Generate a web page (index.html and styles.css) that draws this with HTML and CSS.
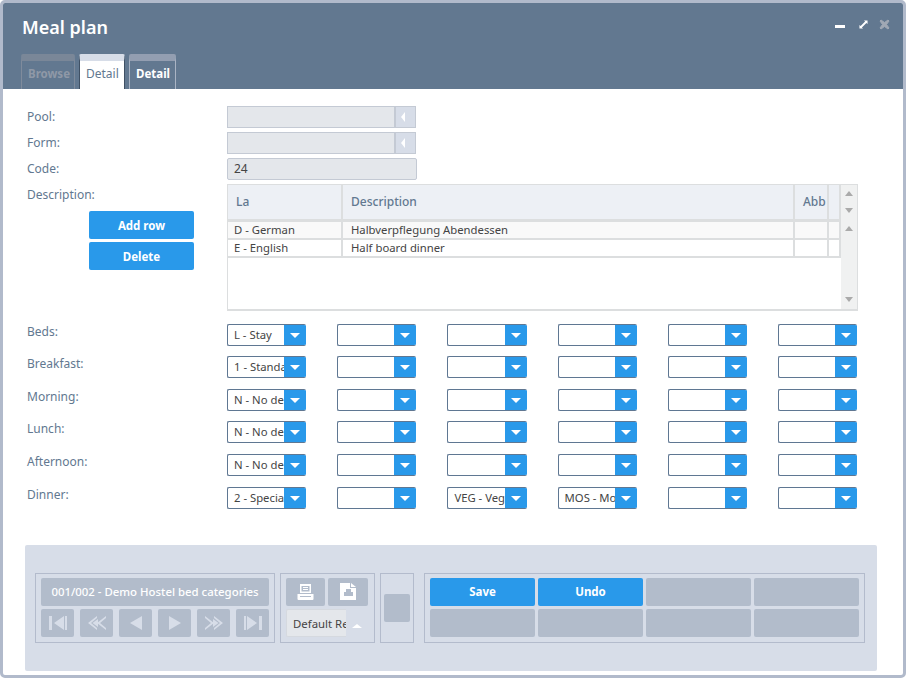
FILE: index.html
```html
<!DOCTYPE html>
<html lang="en">
<head>
<meta charset="UTF-8" />
<title>Meal plan</title>
<link rel="stylesheet" href="styles.css">
</head>
<body>

<div class="window">
  <div class="header">
    <div class="title-row">
      <h1>Meal plan</h1>
      <div class="win-icons">
        <span class="win-min"></span>
        <svg class="win-max" width="9" height="9" viewBox="0 0 10 10"><path d="M5.5 0.5H9.5V4.5L8.2 3.2L3.2 8.2L4.5 9.5H0.5V5.5L1.8 6.8L6.8 1.8Z" fill="#fff"/></svg>
        <svg class="win-close" width="11" height="11" viewBox="0 0 11 11"><path d="M2 1L5.500 3.500L9 1L10 2L7.500 5.500L10 9L9 10L5.500 7.500L2 10L1 9L3.500 5.500L1 2Z" fill="#a0a8b4" stroke="#a0a8b4"/></svg>
      </div>
    </div>
    <div class="tabs">
      <div class="tab tab-disabled">Browse</div>
      <div class="tab tab-active">Detail</div>
      <div class="tab tab-other">Detail</div>
    </div>
  </div>

  <div class="content">
    <div class="form-top">
      <label>Pool:</label>
      <div class="lookup"><div class="lookup-input"></div><div class="lookup-btn"><i class="tri-left"></i></div></div>
      <label>Form:</label>
      <div class="lookup"><div class="lookup-input"></div><div class="lookup-btn"><i class="tri-left"></i></div></div>
      <label>Code:</label>
      <div class="code-input">24</div>
      <div class="desc-side">
        <label>Description:</label>
        <button class="blue-btn add-row">Add row</button>
        <button class="blue-btn">Delete</button>
      </div>
      <div class="grid-box">
        <table class="grid">
          <colgroup><col class="c1"><col class="c2"><col class="c3"><col class="c4"></colgroup>
          <tr class="grid-head"><th>La</th><th>Description</th><th>Abb</th><th></th></tr>
          <tr class="odd"><td>D - German</td><td>Halbverpflegung Abendessen</td><td></td><td></td></tr>
          <tr><td>E - English</td><td>Half board dinner</td><td></td><td></td></tr>
        </table>
        <div class="scrollbar">
          <i class="tri-up"></i>
          <i class="tri-down head-down"></i>
          <i class="tri-up body-up"></i>
          <i class="tri-down body-down"></i>
        </div>
      </div>
    </div>

    <div class="meal-rows">
      <div class="meal-row">
        <label>Beds:</label>
        <div class="sels">
          <div class="sel"><span>L - Stay</span><b></b></div>
          <div class="sel"><span></span><b></b></div>
          <div class="sel"><span></span><b></b></div>
          <div class="sel"><span></span><b></b></div>
          <div class="sel"><span></span><b></b></div>
          <div class="sel"><span></span><b></b></div>
        </div>
      </div>
      <div class="meal-row">
        <label>Breakfast:</label>
        <div class="sels">
          <div class="sel"><span>1 - Standard</span><b></b></div>
          <div class="sel"><span></span><b></b></div>
          <div class="sel"><span></span><b></b></div>
          <div class="sel"><span></span><b></b></div>
          <div class="sel"><span></span><b></b></div>
          <div class="sel"><span></span><b></b></div>
        </div>
      </div>
      <div class="meal-row">
        <label>Morning:</label>
        <div class="sels">
          <div class="sel"><span>N - No demand</span><b></b></div>
          <div class="sel"><span></span><b></b></div>
          <div class="sel"><span></span><b></b></div>
          <div class="sel"><span></span><b></b></div>
          <div class="sel"><span></span><b></b></div>
          <div class="sel"><span></span><b></b></div>
        </div>
      </div>
      <div class="meal-row">
        <label>Lunch:</label>
        <div class="sels">
          <div class="sel"><span>N - No demand</span><b></b></div>
          <div class="sel"><span></span><b></b></div>
          <div class="sel"><span></span><b></b></div>
          <div class="sel"><span></span><b></b></div>
          <div class="sel"><span></span><b></b></div>
          <div class="sel"><span></span><b></b></div>
        </div>
      </div>
      <div class="meal-row">
        <label>Afternoon:</label>
        <div class="sels">
          <div class="sel"><span>N - No demand</span><b></b></div>
          <div class="sel"><span></span><b></b></div>
          <div class="sel"><span></span><b></b></div>
          <div class="sel"><span></span><b></b></div>
          <div class="sel"><span></span><b></b></div>
          <div class="sel"><span></span><b></b></div>
        </div>
      </div>
      <div class="meal-row">
        <label>Dinner:</label>
        <div class="sels">
          <div class="sel"><span>2 - Special</span><b></b></div>
          <div class="sel"><span></span><b></b></div>
          <div class="sel"><span>VEG - Vegetarian</span><b></b></div>
          <div class="sel"><span>MOS - Moslem</span><b></b></div>
          <div class="sel"><span></span><b></b></div>
          <div class="sel"><span></span><b></b></div>
        </div>
      </div>
    </div>

    <div class="toolbar">
      <div class="group group-nav">
        <div class="record">001/002 - Demo Hostel bed categories</div>
        <div class="nav-row">
          <div class="tool-btn"><svg width="22" height="16" viewBox="0 0 22 16"><path d="M2 1H5V15H2ZM17 1V15L7 8ZM18 1H20V15H18Z" fill="#d7dde8"/></svg></div>
          <div class="tool-btn"><svg width="22" height="16" viewBox="0 0 22 16"><path d="M11 1L2 8L11 15V13L5 8L11 3ZM20 1L11 8L20 15V13L14 8L20 3Z" fill="#d7dde8"/><path d="M12 4V12L6.500 8Z" fill="#d7dde8"/></svg></div>
          <div class="tool-btn"><svg width="22" height="16" viewBox="0 0 22 16"><path d="M17 1V15L5 8Z" fill="#d7dde8"/></svg></div>
          <div class="tool-btn"><svg width="22" height="16" viewBox="0 0 22 16"><path d="M5 1V15L17 8Z" fill="#d7dde8"/></svg></div>
          <div class="tool-btn"><svg width="22" height="16" viewBox="0 0 22 16"><path d="M2 1L11 8L2 15V13L8 8L2 3ZM11 1L20 8L11 15V13L17 8L11 3Z" fill="#d7dde8"/><path d="M10 4V12L15.500 8Z" fill="#d7dde8"/></svg></div>
          <div class="tool-btn"><svg width="22" height="16" viewBox="0 0 22 16"><path d="M2 1H4V15H2ZM5 1V15L15 8ZM17 1H20V15H17Z" fill="#d7dde8"/></svg></div>
        </div>
      </div>
      <div class="group group-print">
        <div class="print-row">
          <div class="tool-btn print-btn"><svg width="17" height="16" viewBox="0 0 17 16"><path d="M3 0H14V9H3ZM4.500 2V7.500H12.500V2Z" fill="#fff" fill-rule="evenodd"/><path d="M6 3H11V4H6ZM6 5H11V6H6Z" fill="#fff"/><path d="M0.500 10H16.500V15Q16.500 16 15.500 16H1.500Q0.500 16 0.500 15ZM3 12V13H14V12Z" fill="#fff" fill-rule="evenodd"/></svg></div>
          <div class="tool-btn doc-btn"><svg width="16" height="17" viewBox="0 0 16 17"><path d="M0 0H10V5H16V17H0ZM6 6V9H11V6ZM4 9V13H13V9Z" fill="#fff" fill-rule="evenodd"/><path d="M11 0L16 4H11Z" fill="#fff"/></svg></div>
        </div>
        <div class="report-row">
          <div class="report-sel">Default Report</div>
          <i class="tri-up-white"></i>
        </div>
      </div>
      <div class="group group-single">
        <div class="tool-btn single-btn"></div>
      </div>
      <div class="group group-actions">
        <div class="tool-btn act-blue">Save</div>
        <div class="tool-btn act-blue">Undo</div>
        <div class="tool-btn"></div>
        <div class="tool-btn"></div>
        <div class="tool-btn"></div>
        <div class="tool-btn"></div>
        <div class="tool-btn"></div>
        <div class="tool-btn"></div>
      </div>
    </div>
  </div>
</div>

</body>
</html>
```

FILE: styles.css
```css
* {
  box-sizing: border-box;
}
html, body {
  margin: 0;
  background: #fff;
}
body {
  font-family: "Noto Sans", "Open Sans", sans-serif;
  font-size: 12px;
  color: #444;
}
.window {
  width: 906px;
  height: 678px;
  border: 3px solid #b1bacb;
  border-radius: 5px;
  background: #fff;
  overflow: hidden;
}

/* header */
.header {
  height: 86px;
  background: #627890;
  padding: 0 0 0 18px;
  display: flex;
  flex-direction: column;
  justify-content: space-between;
}
.title-row {
  display: flex;
  justify-content: space-between;
  padding-top: 11px;
}
h1 {
  margin: 0;
  font-size: 18px;
  line-height: 26px;
  font-weight: 600;
  color: #fff;
  padding-left: 1px;
}
.win-icons {
  display: flex;
  align-items: flex-start;
  padding-right: 13px;
  padding-top: 5px;
}
.win-min {
  width: 10px;
  height: 3px;
  background: #fff;
  margin-top: 6px;
}
.win-max {
  margin-left: 14px;
  margin-top: 1px;
}
.win-close {
  margin-left: 11px;
  margin-top: 0;
}
.tabs {
  display: flex;
  gap: 4px;
}
.tab {
  height: 35px;
  padding: 3px 6px 0;
  border: 1px solid;
  border-bottom: 0;
  border-top-width: 7px;
  border-radius: 2px 2px 0 0;
  font-size: 12px;
  line-height: 20px;
}
.tab-disabled {
  width: 54px;
  border-color: #7a8798 #7f8b9c;
  color: #8f98a7;
  font-size: 11.500px;
  font-weight: 700;
}
.tab-active {
  width: 46px;
  background: #fff;
  border-color: #d7dde8 #3f5064;
  color: #627890;
}
.tab-other {
  width: 47px;
  border-color: #939eb1 #aab4c4;
  color: #fff;
  font-size: 11.500px;
  font-weight: 700;
}

/* form */
.content {
  padding: 17px 0 0 22px;
}
label {
  display: block;
  color: #627890;
  line-height: 21px;
  padding-left: 2px;
}
.form-top {
  display: grid;
  grid-template-columns: 202px 631px;
  grid-template-rows: 22px 22px 22px 127px;
  row-gap: 4px;
}
.lookup {
  display: flex;
  width: 189px;
  height: 22px;
}
.lookup-input {
  flex: 1;
  background: #e4e7eb;
  border: 1px solid #c4cad4;
  border-right-width: 2px;
}
.lookup-btn {
  width: 20px;
  background: #d7dde8;
  border: 1px solid #c4cad4;
  border-left: 0;
  display: flex;
  align-items: center;
  justify-content: center;
}
.tri-left {
  border-top: 5px solid transparent;
  border-bottom: 5px solid transparent;
  border-right: 4px solid #fff;
  margin-right: 5px;
}
.code-input {
  width: 190px;
  height: 22px;
  background: #e4e7eb;
  border: 1px solid #c4cad4;
  border-radius: 2px;
  padding-left: 6px;
  line-height: 20px;
}
.add-row {
  margin-top: 6px;
  margin-bottom: 3px;
}
.blue-btn {
  display: block;
  width: 105px;
  height: 28px;
  margin-left: 64px;
  border: 0;
  border-radius: 2px;
  background: #2999ea;
  color: #fff;
  font-family: inherit;
  font-size: 11.500px;
  font-weight: 700;
  padding: 0;
}
.grid-box {
  height: 127px;
  border: 1px solid #dcdedf;
  border-width: 1px 1px 2px 1px;
  display: flex;
  justify-content: space-between;
}
.grid {
  width: 612px;
  table-layout: fixed;
  border-collapse: collapse;
  align-self: flex-start;
  font-size: 11.300px;
}
.c1 { width: 114px; }
.c2 { width: 452px; }
.c3 { width: 34px; }
.c4 { width: 12px; }
.grid th {
  height: 35px;
  background: #edf0f5;
  border-right: 2px solid #dcdedf;
  border-bottom: 3px solid #dcdedf;
  text-align: left;
  color: #627890;
  font-size: 12px;
  font-weight: 500;
  padding: 0 8px;
  overflow: hidden;
  white-space: nowrap;
}
.grid td {
  height: 18px;
  border-right: 2px solid #dcdedf;
  border-bottom: 2px solid #dcdedf;
  padding: 0 8px;
  line-height: 16px;
  overflow: hidden;
  white-space: nowrap;
}
.grid th:last-child, .grid td:last-child {
  padding: 0;
}
.grid td:first-child {
  padding-left: 6px;
}
.odd td {
  background: #f9f9f9;
}
.scrollbar {
  width: 18px;
  background: #f0f1f1;
  display: flex;
  flex-direction: column;
  align-items: center;
  padding-top: 6px;
}
.tri-up, .tri-down {
  width: 0;
  height: 0;
  border-left: 4px solid transparent;
  border-right: 4px solid transparent;
}
.tri-up {
  border-bottom: 5px solid #aaa;
}
.tri-down {
  border-top: 5px solid #aaa;
}
.head-down {
  margin-top: 12px;
}
.body-up {
  margin-top: 13px;
}
.body-down {
  margin-top: 66px;
}

/* meal rows */
.meal-rows {
  margin-top: 12.600px;
  display: flex;
  flex-direction: column;
  gap: 10.600px;
}
.meal-row {
  display: flex;
  height: 22px;
}
.meal-row label {
  width: 202px;
  flex: none;
  line-height: 16px;
}
.sels {
  width: 630.300px;
  display: flex;
  justify-content: space-between;
}
.sel {
  display: flex;
  width: 79.300px;
  height: 22px;
  border: 1px solid #5f7792;
  border-right: 0;
  border-radius: 2px;
  background: #fff;
  overflow: hidden;
  font-size: 11.300px;
}
.sel span {
  flex: 1;
  min-width: 0;
  padding-left: 6px;
  line-height: 20px;
  white-space: nowrap;
  overflow: hidden;
}
.sel b {
  width: 22px;
  margin: -1px 0;
  background: #2999ea;
  position: relative;
  flex: none;
}
.sel b::after {
  content: "";
  position: absolute;
  left: 6px;
  top: 9px;
  border-left: 5px solid transparent;
  border-right: 5px solid transparent;
  border-top: 5px solid #fff;
}

/* bottom toolbar */
.toolbar {
  width: 852px;
  height: 126px;
  margin-top: 36.400px;
  background: #d7dde8;
  border-radius: 2px;
  padding: 28px 12px 0 10px;
  display: flex;
  align-items: flex-start;
}
.group {
  height: 70px;
  border: 1px solid #b3bbcc;
  padding: 4px 5px;
}
.tool-btn {
  background: #b2bccb;
  border-radius: 2px;
  height: 28px;
  display: flex;
  align-items: center;
  justify-content: center;
  color: #fff;
  font-size: 11.500px;
  font-weight: 700;
}
.group-nav {
  width: 240px;
}
.record {
  height: 28px;
  background: #b2bccb;
  border-radius: 2px;
  color: #fff;
  font-size: 11.400px;
  font-weight: 500;
  line-height: 27px;
  text-align: center;
  white-space: nowrap;
}
.nav-row {
  display: flex;
  justify-content: space-between;
  margin-top: 3px;
}
.nav-row .tool-btn {
  width: 33px;
}
.group-print {
  width: 95px;
  margin-left: 5px;
}
.print-row {
  display: flex;
  gap: 3px;
}
.print-btn {
  width: 39px;
}
.doc-btn {
  width: 40px;
}
.report-row {
  display: flex;
  align-items: center;
  margin-top: 3px;
}
.report-sel {
  width: 60px;
  height: 28px;
  background: #e4e7eb;
  border: 1px solid #d5d9df;
  border-right: 0;
  border-radius: 2px 0 0 2px;
  padding-left: 6px;
  font-size: 11.400px;
  line-height: 27px;
  white-space: nowrap;
  overflow: hidden;
}
.tri-up-white {
  margin-left: 6px;
  margin-top: 6px;
  border-left: 5px solid transparent;
  border-right: 5px solid transparent;
  border-bottom: 4px solid #fff;
}
.group-single {
  width: 34px;
  margin-left: 5px;
  padding: 20px 3px 0;
}
.single-btn {
  width: 26px;
}
.group-actions {
  width: 441px;
  margin-left: 10px;
  display: grid;
  grid-template-columns: repeat(4, 105px);
  column-gap: 3px;
  row-gap: 3px;
  align-content: start;
}
.act-blue {
  background: #2999ea;
}
```
